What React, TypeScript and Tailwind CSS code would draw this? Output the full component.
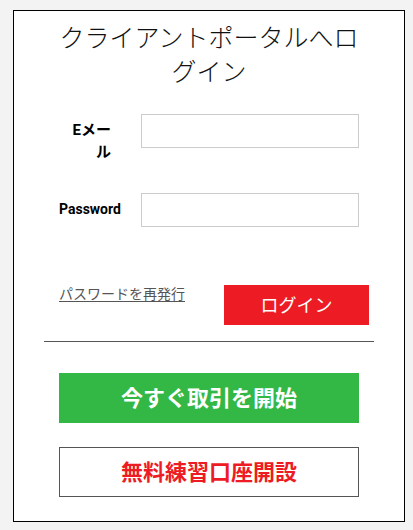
const FONT = "font-['Roboto','Noto_Sans_CJK_JP',sans-serif]";

export default function App() {
  return (
    <div className={`min-h-[530px] bg-[#f3f3f3] pt-[10px] ${FONT}`}>
      <div className="ml-[13px] w-[392px] border border-black bg-white px-[45px] pb-[24px] pt-[11px]">
        <h1 className="-mx-[4px] text-center text-[25px] font-light leading-[34px] text-[#111]">
          クライアントポータルへログイン
        </h1>

        <div className="mt-[24px] flex h-[34px] items-start">
          <label className="w-[52px] shrink-0 pt-[5px] text-right text-[15px] font-bold leading-[22px] text-black">
            Eメール
          </label>
          <input
            type="text"
            className="ml-auto h-[34px] w-[218px] border border-[#cccccc] bg-white outline-none"
          />
        </div>

        <div className="mt-[45px] flex h-[34px] items-center">
          <label className="w-[52px] shrink-0 whitespace-nowrap pb-[3px] text-[14px] font-bold leading-[20px] text-black">
            Password
          </label>
          <input
            type="password"
            className="ml-auto h-[34px] w-[218px] border border-[#cccccc] bg-white outline-none"
          />
        </div>

        <div className="-mr-[10px] mt-[58px] flex items-start justify-between">
          <a href="#" className="text-[14px] leading-[18px] text-[#555] underline underline-offset-2">
            パスワードを再発行
          </a>
          <button
            type="button"
            className="h-[40px] w-[145px] bg-[#ed1c24] text-[18px] text-white"
          >
            ログイン
          </button>
        </div>

        <div className="-mx-[15px] mt-[16px] h-px bg-[#555]" />

        <button
          type="button"
          className="mt-[31px] flex h-[50px] w-full items-center justify-center bg-[#33b846] text-[22px] font-bold text-white"
        >
          今すぐ取引を開始
        </button>

        <button
          type="button"
          className="mt-[24px] flex h-[50px] w-full items-center justify-center border border-[#555] bg-white text-[22px] font-bold text-[#ed1c24]"
        >
          無料練習口座開設
        </button>
      </div>
    </div>
  );
}
